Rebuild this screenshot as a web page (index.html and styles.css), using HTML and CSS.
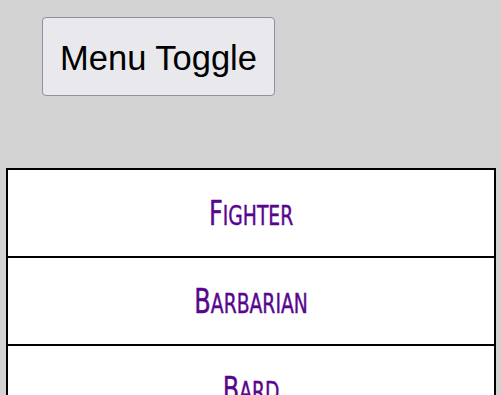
FILE: index.html
```html
<!DOCTYPE html>
<html>
<head>
<meta charset="utf-8">
<link rel="stylesheet" href="styles.css">
</head>
<body>
<div class="top">
  <button class="toggle">Menu Toggle</button>
</div>
<ul class="menu">
  <li class="item"><a class="link" href="#"><span class="label">F<span class="sc">ighter</span></span></a></li>
  <li class="item"><a class="link" href="#"><span class="label">B<span class="sc">arbarian</span></span></a></li>
  <li class="item"><a class="link" href="#"><span class="label">B<span class="sc">ard</span></span></a></li>
</ul>
</body>
</html>
```
FILE: styles.css
```css
html, body {
  margin: 0;
  padding: 0;
  background: #d3d3d3;
  height: 100%;
  overflow: hidden;
}
.top {
  padding: 17px 0 0 42px;
  height: 168px;
  box-sizing: border-box;
}
.toggle {
  font-family: "Liberation Sans", Arial, sans-serif;
  font-size: 34.5px;
  color: #000;
  background: #e9e9ed;
  border: 1px solid #8f8f9d;
  border-radius: 4px;
  width: 233px;
  height: 79px;
  padding: 3px 0 0 0;
  margin: 0;
}
.menu {
  list-style: none;
  margin: 0 0 0 6px;
  padding: 0;
  width: 490px;
}
.item {
  background: #fff;
  border: 2px solid #000;
  border-bottom: none;
  height: 86px;
  display: flex;
  align-items: center;
  justify-content: center;
}
.link {
  text-decoration: none;
  color: #58068e;
  font-family: "DejaVu Sans Condensed", "DejaVu Sans", sans-serif;
  font-size: 33px;
  line-height: 1;
  padding-top: 1px;
  -webkit-text-stroke: 0.4px #58068e;
}
.label {
  display: inline-block;
  transform: scaleX(0.81);
}
.sc {
  text-transform: uppercase;
  font-size: 0.78em;
}
```
